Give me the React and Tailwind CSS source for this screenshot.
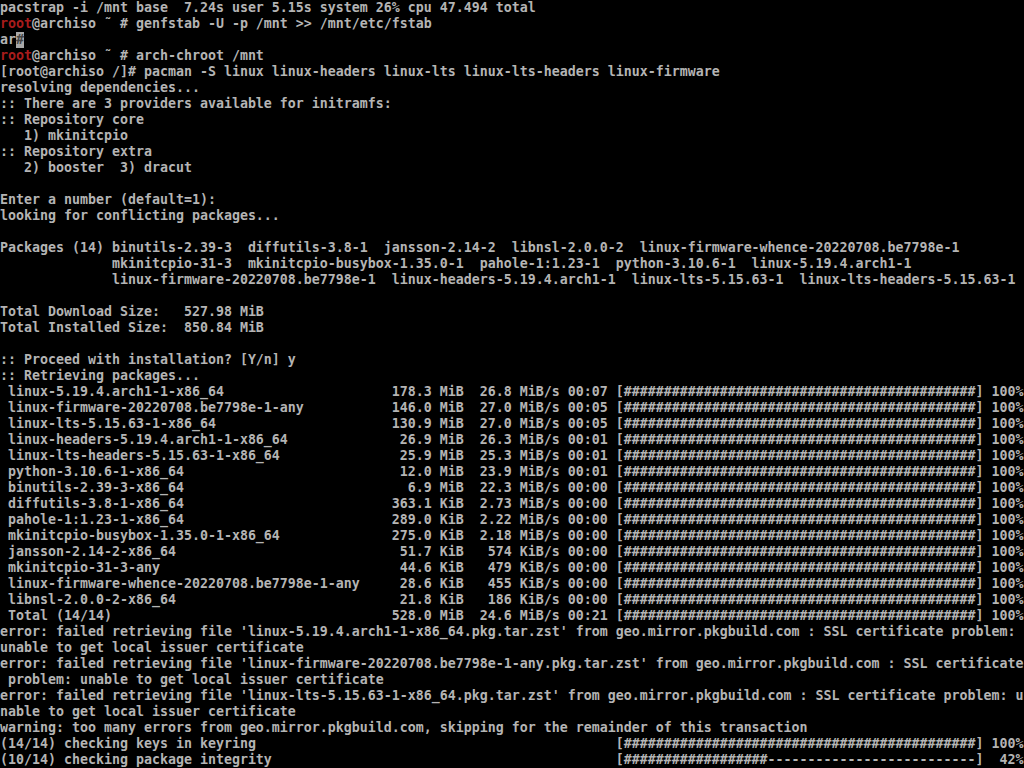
import React from "react";

const H = "#".repeat(44);
const bar42 = "#".repeat(18) + "-".repeat(26);

function row(name, size, rate, runit, eta, bar, pct) {
  return (
    " " +
    name.padEnd(48) +
    size.padStart(9) +
    rate.padStart(6) +
    " " +
    runit +
    " " +
    eta +
    " [" +
    bar +
    "]" +
    pct.padStart(5)
  );
}

const pkgs = [
  ["linux-5.19.4.arch1-1-x86_64", "178.3 MiB", "26.8", "MiB/s", "00:07"],
  ["linux-firmware-20220708.be7798e-1-any", "146.0 MiB", "27.0", "MiB/s", "00:05"],
  ["linux-lts-5.15.63-1-x86_64", "130.9 MiB", "27.0", "MiB/s", "00:05"],
  ["linux-headers-5.19.4.arch1-1-x86_64", "26.9 MiB", "26.3", "MiB/s", "00:01"],
  ["linux-lts-headers-5.15.63-1-x86_64", "25.9 MiB", "25.3", "MiB/s", "00:01"],
  ["python-3.10.6-1-x86_64", "12.0 MiB", "23.9", "MiB/s", "00:01"],
  ["binutils-2.39-3-x86_64", "6.9 MiB", "22.3", "MiB/s", "00:00"],
  ["diffutils-3.8-1-x86_64", "363.1 KiB", "2.73", "MiB/s", "00:00"],
  ["pahole-1:1.23-1-x86_64", "289.0 KiB", "2.22", "MiB/s", "00:00"],
  ["mkinitcpio-busybox-1.35.0-1-x86_64", "275.0 KiB", "2.18", "MiB/s", "00:00"],
  ["jansson-2.14-2-x86_64", "51.7 KiB", "574", "KiB/s", "00:00"],
  ["mkinitcpio-31-3-any", "44.6 KiB", "479", "KiB/s", "00:00"],
  ["linux-firmware-whence-20220708.be7798e-1-any", "28.6 KiB", "455", "KiB/s", "00:00"],
  ["libnsl-2.0.0-2-x86_64", "21.8 KiB", "186", "KiB/s", "00:00"],
  ["Total (14/14)", "528.0 MiB", "24.6", "MiB/s", "00:21"],
];

const plain = [
  "[root@archiso /]# pacman -S linux linux-headers linux-lts linux-lts-headers linux-firmware",
  "resolving dependencies...",
  ":: There are 3 providers available for initramfs:",
  ":: Repository core",
  "   1) mkinitcpio",
  ":: Repository extra",
  "   2) booster  3) dracut",
  "",
  "Enter a number (default=1):",
  "looking for conflicting packages...",
  "",
  "Packages (14) binutils-2.39-3  diffutils-3.8-1  jansson-2.14-2  libnsl-2.0.0-2  linux-firmware-whence-20220708.be7798e-1",
  "              mkinitcpio-31-3  mkinitcpio-busybox-1.35.0-1  pahole-1:1.23-1  python-3.10.6-1  linux-5.19.4.arch1-1",
  "              linux-firmware-20220708.be7798e-1  linux-headers-5.19.4.arch1-1  linux-lts-5.15.63-1  linux-lts-headers-5.15.63-1",
  "",
  "Total Download Size:   527.98 MiB",
  "Total Installed Size:  850.84 MiB",
  "",
  ":: Proceed with installation? [Y/n] y",
  ":: Retrieving packages...",
  ...pkgs.map((p) => row(p[0], p[1], p[2], p[3], p[4], H, "100%")),
  "error: failed retrieving file 'linux-5.19.4.arch1-1-x86_64.pkg.tar.zst' from geo.mirror.pkgbuild.com : SSL certificate problem:",
  "unable to get local issuer certificate",
  "error: failed retrieving file 'linux-firmware-20220708.be7798e-1-any.pkg.tar.zst' from geo.mirror.pkgbuild.com : SSL certificate",
  " problem: unable to get local issuer certificate",
  "error: failed retrieving file 'linux-lts-5.15.63-1-x86_64.pkg.tar.zst' from geo.mirror.pkgbuild.com : SSL certificate problem: u",
  "nable to get local issuer certificate",
  "warning: too many errors from geo.mirror.pkgbuild.com, skipping for the remainder of this transaction",
  "(14/14) checking keys in keyring".padEnd(77) + "[" + H + "] 100%",
  "(10/14) checking package integrity".padEnd(77) + "[" + bar42 + "]  42%",
];

function Line({ children }) {
  return <div className="h-4 leading-4 whitespace-pre overflow-hidden">{children}</div>;
}

export default function App() {
  return (
    <div
      className="w-[1024px] h-[768px] overflow-hidden bg-black text-[#b4b4b4] text-[13.29px] font-bold"
      style={{ fontFamily: '"DejaVu Sans Mono", monospace' }}
    >
      <Line>pacstrap -i /mnt base  7.24s user 5.15s system 26% cpu 47.494 total</Line>
      <Line>
        <span className="text-[#a81c1c]">root</span>@archiso ˜ # genfstab -U -p /mnt {">>"} /mnt/etc/fstab
      </Line>
      <Line>
        ar<span className="inline-block w-2 h-4 bg-[#a8a8a8] text-[#444] align-top">#</span>
      </Line>
      <Line>
        <span className="text-[#a81c1c]">root</span>@archiso ˜ # arch-chroot /mnt
      </Line>
      {plain.map((l, i) => (
        <Line key={i}>{l}</Line>
      ))}
    </div>
  );
}
